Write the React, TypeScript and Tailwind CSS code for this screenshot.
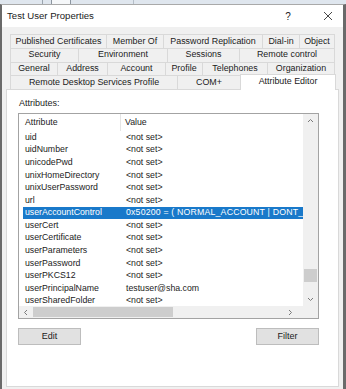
import React from "react";

type Tab = { label: string; w: string; selected?: boolean };

const TAB_ROWS: Tab[][] = [
  [
    { label: "Published Certificates", w: "w-[96px]" },
    { label: "Member Of", w: "w-[57px]" },
    { label: "Password Replication", w: "w-[99px]" },
    { label: "Dial-in", w: "w-[37px]" },
    { label: "Object", w: "w-[36px]" },
  ],
  [
    { label: "Security", w: "w-[68px]" },
    { label: "Environment", w: "w-[89px]" },
    { label: "Sessions", w: "w-[72px]" },
    { label: "Remote control", w: "w-[96px]" },
  ],
  [
    { label: "General", w: "w-[47px]" },
    { label: "Address", w: "w-[50px]" },
    { label: "Account", w: "w-[58px]" },
    { label: "Profile", w: "w-[37px]" },
    { label: "Telephones", w: "w-[65px]" },
    { label: "Organization", w: "w-[68px]" },
  ],
  [
    { label: "Remote Desktop Services Profile", w: "w-[167px]" },
    { label: "COM+", w: "w-[63px]" },
    { label: "Attribute Editor", w: "w-[96px]", selected: true },
  ],
];

const ATTRS: [string, string][] = [
  ["uid", "<not set>"],
  ["uidNumber", "<not set>"],
  ["unicodePwd", "<not set>"],
  ["unixHomeDirectory", "<not set>"],
  ["unixUserPassword", "<not set>"],
  ["url", "<not set>"],
  ["userAccountControl", "0x50200 = ( NORMAL_ACCOUNT | DONT_"],
  ["userCert", "<not set>"],
  ["userCertificate", "<not set>"],
  ["userParameters", "<not set>"],
  ["userPassword", "<not set>"],
  ["userPKCS12", "<not set>"],
  ["userPrincipalName", "testuser@sha.com"],
  ["userSharedFolder", "<not set>"],
];

function Chevron({ dir }: { dir: "up" | "down" | "left" | "right" }) {
  const d = {
    up: "M1 4 L3.5 1.5 L6 4",
    down: "M1 2 L3.5 4.5 L6 2",
    left: "M4 1 L1.5 3.5 L4 6",
    right: "M2 1 L4.5 3.5 L2 6",
  }[dir];
  return (
    <svg width="7" height="7" viewBox="0 0 7 7" fill="none" stroke="#7a7a7a" strokeWidth="1">
      <path d={d} />
    </svg>
  );
}

export default function App() {
  return (
    <div
      className="w-[346px] h-[389px] overflow-hidden flex flex-col bg-[#f0f0f0] text-[#1b1b1b]"
      style={{ fontFamily: '"Liberation Sans", Arial, sans-serif' }}
    >
      {/* window behind */}
      <div className="h-[4px] shrink-0 bg-[#dfe6ee] flex items-end">
        <div className="ml-[42px] w-px h-[4px] bg-[#9aa4ae]" />
        <div className="ml-[8px] w-[20px] h-[4px] bg-[#f5f7f9] border-l border-r border-[#8d96a0]" />
        <div className="ml-[62px] w-px h-[4px] bg-[#b5bec8]" />
      </div>

      <div className="flex-1 flex flex-col border-l-2 border-r-[3px] border-t border-[#6a6a6a] border-t-[#a9a9a9]">
        {/* title bar */}
        <div className="h-[22px] shrink-0 bg-white flex items-center pl-[5px] text-[9.6px]">
          <span className="flex-1">Test User Properties</span>
          <span className="w-[8px] text-center mr-[31px] text-[10px]">?</span>
          <svg width="10" height="10" viewBox="0 0 10 10" className="mr-[10px]" stroke="#333" strokeWidth="0.9">
            <path d="M1 1 L9 9 M9 1 L1 9" />
          </svg>
        </div>

        {/* tabs */}
        <div className="mt-[7px] pl-[8px] text-[8.9px]">
          {TAB_ROWS.map((row, ri) => (
            <div key={ri} className="h-[13.75px] flex items-end">
              {row.map((t, ti) => (
                <div
                  key={t.label}
                  className={
                    t.selected
                      ? `${t.w} h-[16.5px] -mb-px relative z-10 bg-white border-l border-t border-r border-[#d9d9d9] flex items-center justify-center pb-[2px]`
                      : `${t.w} h-full border-l border-t border-[#d9d9d9] flex items-center justify-center ${ti === row.length - 1 ? "border-r" : ""}`
                  }
                >
                  <span className="whitespace-nowrap">{t.label}</span>
                </div>
              ))}
            </div>
          ))}
        </div>

        {/* panel */}
        <div className="ml-[4px] w-[333px] h-[298px] bg-white border border-[#d9d9d9] flex flex-col">
          <div className="mt-[8px] ml-[12px] text-[9px] leading-[10px]">Attributes:</div>

          <div className="mt-[5px] ml-[11px] w-[301px] h-[206px] border border-[#a3a3a3] flex flex-col text-[8.75px]">
            <div className="flex h-[192px]">
              {/* list */}
              <div className="w-[284px] overflow-hidden flex flex-col">
                <div className="h-[17px] shrink-0 flex items-center">
                  <div className="w-[102px] h-full pl-[6px] flex items-center border-r border-[#e5e5e5]">Attribute</div>
                  <div className="pl-[4px]">Value</div>
                </div>
                {ATTRS.map(([name, value], i) => (
                  <div
                    key={name}
                    className={`h-[12.6px] shrink-0 ml-[4px] flex items-center whitespace-nowrap ${
                      i === 6 ? "bg-[#1979ca] text-white" : ""
                    }`}
                  >
                    <div className="w-[98px] shrink-0 pl-[2px]">{name}</div>
                    <div className={i === 6 ? "pl-[5px] tracking-[0.18px]" : "pl-[5px]"}>{value}</div>
                  </div>
                ))}
              </div>
              {/* vertical scrollbar */}
              <div className="w-[15px] bg-[#f0f0f0] flex flex-col items-center">
                <div className="h-[14px] flex items-center">
                  <Chevron dir="up" />
                </div>
                <div className="flex-1 w-full flex flex-col justify-end px-px">
                  <div className="h-[13px] bg-[#cdcdcd] mb-[14px]" />
                </div>
                <div className="h-[10px] flex items-start">
                  <Chevron dir="down" />
                </div>
              </div>
            </div>
            {/* horizontal scrollbar */}
            <div className="h-[12px] flex bg-[#f0f0f0]">
              <div className="w-[284px] flex items-center">
                <div className="w-[14px] flex justify-center">
                  <Chevron dir="left" />
                </div>
                <div className="w-[140px] h-[10px] bg-[#cdcdcd]" />
                <div className="flex-1" />
                <div className="w-[14px] flex justify-center mr-[6px]">
                  <Chevron dir="right" />
                </div>
              </div>
              <div className="w-[15px]" />
            </div>
          </div>

          <div className="mt-[9px] ml-[11px] w-[301px] flex justify-between text-[9px]">
            <button className="w-[63px] h-[17px] bg-[#e1e1e1] border border-[#bdbdbd] flex items-center justify-center">
              Edit
            </button>
            <button className="w-[63px] h-[17px] bg-[#e1e1e1] border border-[#bdbdbd] flex items-center justify-center">
              Filter
            </button>
          </div>
        </div>
      </div>
    </div>
  );
}
